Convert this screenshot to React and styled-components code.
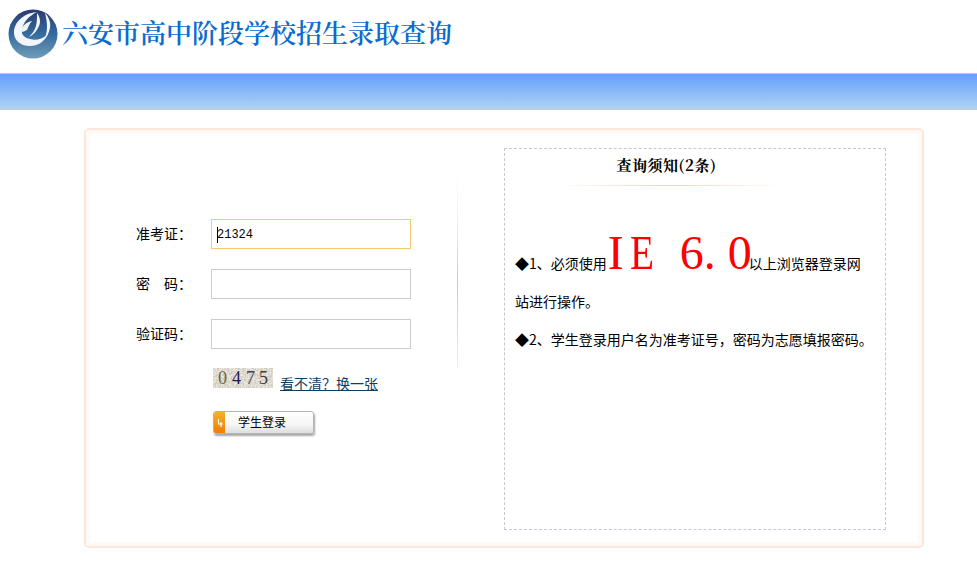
import React from 'react';
import styled, { createGlobalStyle } from 'styled-components';

const Global = createGlobalStyle`
  html, body { margin: 0; padding: 0; background: #fff; }
  body { font-family: "Noto Sans CJK SC", sans-serif; font-size: 14px; color: #000; }
`;
const Page = styled.div`width: 977px; height: 564px; overflow: hidden;`;
const Header = styled.header`height: 73px; display: flex; align-items: flex-start; padding: 9px 0 0 8px; box-sizing: border-box;`;
const Title = styled.h1`margin: 8px 0 0 4px; font: 600 26px/30px "Noto Serif CJK SC", "Noto Sans CJK SC", serif; color: #0a6cd0; white-space: nowrap;`;
const Band = styled.div`height: 37px; box-sizing: border-box; border-top: 1px solid #c4c8cf; border-bottom: 1px solid #c4ccd4; background: linear-gradient(#64a0fa, #b0d2f4);`;
const Card = styled.main`margin: 18px 53px 0 84px; height: 420px; box-sizing: border-box; border: 2px solid #fde6da; border-radius: 5px; background: #fffaf6; padding: 4px; display: flex;`;
const Inner = styled.div`flex: 1; background: #fff; display: flex; padding: 14px 0 13px 0;`;
const LoginCol = styled.section`width: 367px; flex: none; padding-top: 71px; box-sizing: border-box;`;
const Divider = styled.div`width: 1px; flex: none; height: 194px; margin-top: 26px; background: linear-gradient(#fff, #fde4d8 30%, #ffb49a 55%, #fbd8c8 85%, #fdeade);`;
const Row = styled.div`display: flex; align-items: center; height: 30px; margin-bottom: 20px; padding-left: 46px;`;
const Label = styled.label`width: 75px; font: 14px/28px "Noto Sans CJK SC", sans-serif; white-space: pre; margin-bottom: 3px;`;
const Input = styled.div`width: 200px; height: 30px; box-sizing: border-box; border: 1px solid ${p => p.$active ? '#f8c870' : '#cccccc'}; font: 12px/28px "Liberation Mono", monospace; padding: 1px 0 0 5px; display: flex; align-items: center;`;
const Caret = styled.span`display: block; width: 1px; height: 16px; background: #000; margin-right: -1px;`;
const Captcha = styled.div`margin: -1px 0 0 123px; display: flex; align-items: flex-start; gap: 7px; height: 24px;`;
const CaptchaImg = styled.svg`width: 60px; height: 20px; display: block; flex: none;`;
const Refresh = styled.a`font: 14px/20px "Noto Sans CJK SC", sans-serif; color: #0c3e62; text-decoration: underline; margin-top: 5px;`;
const LoginBtn = styled.button`margin: 19px 0 0 123px; display: flex; width: 101px; height: 23px; padding: 0; border: 1px solid #b4b4b4; border-radius: 3px; background: linear-gradient(#fff, #f6f6f6 60%, #dedede); box-shadow: 1px 2px 2px rgba(0,0,0,.35); overflow: hidden; font: 12px/19px "Noto Sans CJK SC", sans-serif; color: #000;`;
const BtnIcon = styled.span`width: 11px; height: 100%; background: linear-gradient(#f8b02c, #ee7c00); flex: none; display: flex; align-items: center; justify-content: center;`;
const BtnText = styled.span`flex: 1; text-align: center; padding-right: 14px;`;
const Notice = styled.aside`margin-left: 46px; width: 382px; height: 382px; flex: none; box-sizing: border-box; border: 1px dashed #c8c8c8; padding: 0 10px;`;
const NoticeTitle = styled.h2`margin: 0; padding: 5px 57px 0 0; font: 700 15px/22px "Noto Serif CJK SC", "Noto Sans CJK SC", serif; text-align: center; letter-spacing: .5px;`;
const Rule = styled.div`height: 1px; margin: 9px 91px 0 42px; background: linear-gradient(90deg, #fff, #fbd0b8 50%, #fff);`;
const NoticeBody = styled.div`margin-top: 48px; padding-right: 1px; font: 14px/38px "Noto Sans CJK SC", sans-serif;`;
const Line = styled.p`margin: 0; font: inherit;`;
const Big = styled.span`display: inline-block; margin: 0 -3px 0 1px; font: 48px/38px "Liberation Serif", serif; color: #f00; white-space: pre;`;
const Cell = styled.span`display: inline-block; width: ${p => p.$w || 24}px; ${p => p.$narrow ? 'transform: scaleX(.82); transform-origin: left;' : ''}`;

function Logo() {
  return (
    <svg width="50" height="50" viewBox="0 0 50 50" style={{ display: 'block' }}>
      <defs>
        <linearGradient id="lg" x1="0" y1="0" x2="0" y2="1">
          <stop offset="0" stopColor="#2a3a70" />
          <stop offset=".5" stopColor="#356a9e" />
          <stop offset="1" stopColor="#6f9db8" />
        </linearGradient>
      </defs>
      <circle cx="25" cy="25" r="24.5" fill="url(#lg)" />
      <path d="M29 3C17 4 8 11 6 21c-1 10 6 16 16 16 8 0 14-4 17-11-5 4-11 6-17 4-5-1-9-4-8-9 1-8 7-14 15-18z" fill="#f2f6fa" />
      <path d="M13 23c0-5 5-10 11-11-3 3-4 7-5 9-2 1-4 2-6 2z" fill="#eef3f8" />
      <path d="M29 4c3 4 4 9 2 13-2 5-6 9-10 11 3-3 6-7 7-11 1-4 1-9 1-13z" fill="#f2f6fa" />
      <path d="M37 4c4 4 6 10 5 15-1 5-3 9-6 12 2-4 3-9 3-13 0-5-1-10-2-14z" fill="#f2f6fa" />
    </svg>
  );
}

function CaptchaPicture() {
  const digits = [['0', 5, '#68684c'], ['4', 19, '#1c1c50'], ['7', 33, '#404060'], ['5', 46, '#403c3c']];
  return (
    <CaptchaImg viewBox="0 0 60 20">
      <defs>
        <filter id="noise" x="0" y="0" width="100%" height="100%"><feTurbulence type="fractalNoise" baseFrequency=".6" numOctaves="2" seed="4" /><feColorMatrix values="0 0 0 0 .62  0 0 0 0 .62  0 0 0 0 .50  5 0 0 0 -2" /></filter>
      </defs>
      <rect width="60" height="20" fill="#eee6e4" />
      <rect width="60" height="20" filter="url(#noise)" />
      {digits.map(([d, x, c]) => (
        <text key={d} x={x} y="16" fontFamily="Liberation Serif" fontSize="18" fill={c}>{d}</text>
      ))}
    </CaptchaImg>
  );
}

export default function App() {
  return (
    <Page>
      <Global />
      <Header>
        <Logo />
        <Title>六安市高中阶段学校招生录取查询</Title>
      </Header>
      <Band />
      <Card>
        <Inner>
          <LoginCol>
            <Row><Label>准考证：</Label><Input $active><Caret />21324</Input></Row>
            <Row><Label>密{'　'}码：</Label><Input /></Row>
            <Row><Label>验证码：</Label><Input /></Row>
            <Captcha>
              <CaptchaPicture />
              <Refresh href="#">看不清？换一张</Refresh>
            </Captcha>
            <LoginBtn>
              <BtnIcon>
                <svg width="7" height="8" viewBox="0 0 7 8"><path d="M2.5 0v5H7M5 3v5" stroke="#fff" strokeWidth="1.2" fill="none" /></svg>
              </BtnIcon>
              <BtnText>学生登录</BtnText>
            </LoginBtn>
          </LoginCol>
          <Divider />
          <Notice>
            <NoticeTitle>查询须知(2条)</NoticeTitle>
            <Rule />
            <NoticeBody>
              <Line>◆1、必须使用<Big><Cell $w={22}>I</Cell><Cell $w={26} $narrow>E</Cell><Cell> </Cell><Cell>6</Cell><Cell>.</Cell><Cell>0</Cell></Big>以上浏览器登录网站进行操作。</Line>
              <Line>◆2、学生登录用户名为准考证号，密码为志愿填报密码。</Line>
            </NoticeBody>
          </Notice>
        </Inner>
      </Card>
    </Page>
  );
}
